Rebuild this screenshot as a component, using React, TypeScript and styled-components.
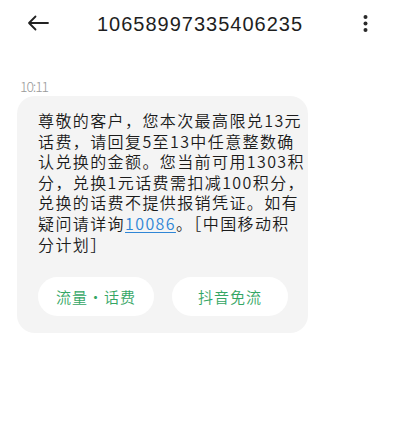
import { createGlobalStyle } from 'styled-components';
import styled from 'styled-components';

const GlobalStyle = createGlobalStyle`
    html, body {
        margin: 0;
        padding: 0;
        background: #ffffff;
    }
`;

const Page = styled.div`
    width: 407px;
    height: 422px;
    background: #ffffff;
    font-family: 'Noto Sans CJK SC', 'Noto Sans', sans-serif;
    color: #1b1b1b;
`;

const Header = styled.header`
    display: flex;
    align-items: center;
    height: 46px;
    padding: 0 39px 0 27px;
`;

const IconButton = styled.div`
    display: flex;
    align-items: center;
    justify-content: center;
    color: #222;
`;

const Title = styled.h1`
    flex: 1;
    margin: 0;
    padding: 2px 12px 0 0;
    text-align: center;
    font-family: 'Liberation Sans', Arial, sans-serif;
    font-weight: 400;
    font-size: 20px;
    letter-spacing: 1px;
    color: #1e1e1e;
`;

const Time = styled.div`
    margin-top: 31px;
    padding-left: 20px;
    line-height: 18px;
    font-size: 14px;
    font-weight: 300;
    letter-spacing: -1.1px;
    color: #9a9a9a;
`;

const Bubble = styled.div`
    width: 291px;
    box-sizing: border-box;
    margin: 1px 0 0 17px;
    padding: 14px 10px 17px 21px;
    background: #f4f4f4;
    border-radius: 18px;
`;

const Body = styled.p`
    margin: 0;
    font-size: 16px;
    font-weight: 350;
    line-height: 20.6px;
    letter-spacing: 1.4px;
    white-space: nowrap;
`;

const Link = styled.span`
    color: #2f86d6;
    text-decoration: underline;
    text-underline-offset: 2px;
`;

const Actions = styled.div`
    display: flex;
    gap: 18px;
    margin-top: 23px;
`;

const Chip = styled.div`
    display: flex;
    align-items: center;
    justify-content: center;
    width: 116px;
    height: 39px;
    background: #ffffff;
    border-radius: 20px;
    font-size: 15px;
    font-weight: 350;
    letter-spacing: 1px;
    color: #34a664;
`;

const lines = [
    '尊敬的客户，您本次最高限兑13元',
    '话费，请回复5至13中任意整数确',
    '认兑换的金额。您当前可用1303积',
    '分，兑换1元话费需扣减100积分，',
    '兑换的话费不提供报销凭证。如有',
];

export default function App() {
    return (
        <Page>
            <GlobalStyle />
            <Header>
                <IconButton>
                    <svg width="22" height="16" viewBox="0 0 22 16" fill="none">
                        <path
                            d="M21 8H2M8.5 1.5L2 8l6.5 6.5"
                            stroke="#222"
                            strokeWidth="1.8"
                            strokeLinecap="round"
                            strokeLinejoin="round"
                        />
                    </svg>
                </IconButton>
                <Title>10658997335406235</Title>
                <IconButton>
                    <svg width="5" height="17" viewBox="0 0 5 17">
                        <circle cx="2.5" cy="2" r="2" fill="#2a2a2a" />
                        <circle cx="2.5" cy="8.5" r="2" fill="#2a2a2a" />
                        <circle cx="2.5" cy="15" r="2" fill="#2a2a2a" />
                    </svg>
                </IconButton>
            </Header>
            <Time>10:11</Time>
            <Bubble>
                <Body>
                    {lines.map((line) => (
                        <span key={line}>
                            {line}
                            <br />
                        </span>
                    ))}
                    疑问请详询<Link>10086</Link>。［中国移动积
                    <br />
                    分计划］
                </Body>
                <Actions>
                    <Chip>流量·话费</Chip>
                    <Chip>抖音免流</Chip>
                </Actions>
            </Bubble>
        </Page>
    );
}
